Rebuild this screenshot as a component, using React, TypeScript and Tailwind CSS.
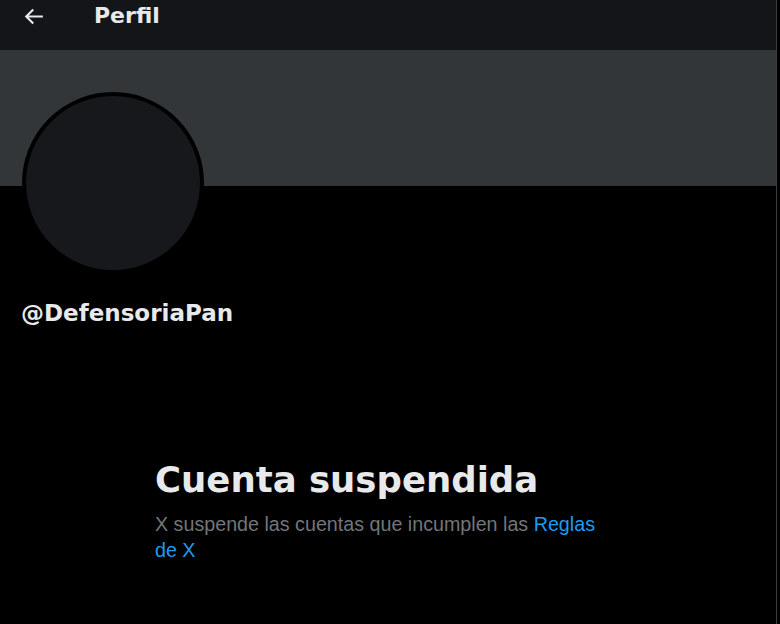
import { FC } from "react"

const BackArrow: FC = () => (
  <svg viewBox="0 0 24 24" className="w-[25px] h-[25px] fill-[#e7e9ea]">
    <path d="M7.414 13l5.043 5.04-1.414 1.42L3.586 12l7.457-7.46 1.414 1.42L7.414 11H21v2H7.414z" />
  </svg>
)

export default function App() {
  return (
    <div className="flex w-[780px] h-[624px] bg-black overflow-hidden font-['DejaVu_Sans',sans-serif]">
      <div className="flex flex-col w-[777px] h-full border-r border-[#3a3d40]">
        {/* header */}
        <div className="flex items-start h-[50px] bg-[#141518]">
          <div className="flex items-center h-[32px] pl-[21px]">
            <BackArrow />
            <span className="ml-[48px] text-[22px] leading-none font-bold text-[#e7e9ea]">
              Perfil
            </span>
          </div>
        </div>

        {/* banner */}
        <div className="h-[136px] bg-[#333639]"></div>

        {/* avatar */}
        <div className="ml-[22px] -mt-[94px] w-[182px] h-[182px] rounded-full border-[4px] border-black bg-[#16181c]"></div>

        <div className="mt-[25px] pl-[21px] text-[23px] leading-[28px] font-bold text-[#e7e9ea]">
          @DefensoriaPan
        </div>

        {/* suspended message */}
        <div className="mt-[132px] pl-[155px]">
          <div className="w-[464px]">
            <h2 className="text-[35.5px] leading-[42px] font-bold text-[#e7e9ea]">
              Cuenta suspendida
            </h2>
            <p className="mt-[10px] text-[19.7px] leading-[26px] text-[#71767b] font-['Liberation_Sans',sans-serif]">
              X suspende las cuentas que incumplen las{" "}
              <span className="text-[#1d9bf0]">Reglas de X</span>
            </p>
          </div>
        </div>
      </div>
    </div>
  )
}
